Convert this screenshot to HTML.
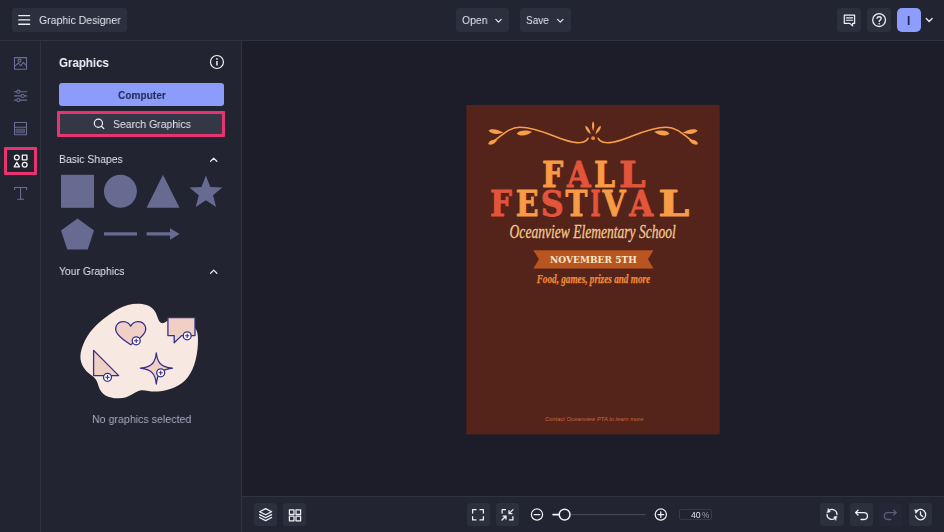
<!DOCTYPE html>
<html lang="en">
<head>
<meta charset="utf-8">
<title>Graphic Designer</title>
<style>
*{box-sizing:border-box;margin:0;padding:0}
html,body{width:944px;height:532px;overflow:hidden;background:#1c1d29}
body{font-family:"Liberation Sans",sans-serif;color:#e8e9f0;position:relative;font-size:12px}
.abs{position:absolute}
#topbar{left:0;top:0;width:944px;height:41px;background:#222431;border-bottom:1px solid #30323f}
#rail{left:0;top:41px;width:41px;height:491px;background:#222431;border-right:1px solid #30323f}
#panel{left:41px;top:41px;width:201px;height:491px;background:#222431;border-right:1px solid #30323f}
#canvas{left:242px;top:41px;width:702px;height:456px;background:#1c1d29}
#bottombar{left:242px;top:496px;width:702px;height:36px;background:#222431;border-top:1px solid #30323f}
.btn{position:absolute;background:#2c2f3e;border-radius:3px}
.txt{position:absolute;white-space:nowrap;line-height:1;transform-origin:0 0;color:#e4e5ee;will-change:transform}
svg{position:absolute;left:0;top:0;overflow:visible}
</style>
</head>
<body>
<div id="topbar" class="abs"></div>
<div id="rail" class="abs"></div>
<div id="panel" class="abs"></div>
<div id="canvas" class="abs"></div>
<div id="bottombar" class="abs"></div>

<!-- TOP BAR -->
<div class="btn" style="left:12px;top:8px;width:115px;height:24px"></div>
<div class="txt" style="left:38.6px;top:15.4px;font-size:11.5px;transform:scaleX(.913)">Graphic Designer</div>
<div class="btn" style="left:456px;top:8px;width:53px;height:24px"></div>
<div class="txt" style="left:462px;top:15.4px;font-size:11.5px;transform:scaleX(.907)">Open</div>
<div class="btn" style="left:520px;top:8px;width:51px;height:24px"></div>
<div class="txt" style="left:526.4px;top:15.4px;font-size:11.5px;transform:scaleX(.873)">Save</div>
<div class="btn" style="left:837px;top:8px;width:24px;height:24px"></div>
<div class="btn" style="left:867px;top:8px;width:24px;height:24px"></div>
<div class="btn" style="left:896.5px;top:8px;width:24px;height:24px;background:#8c9dfb;border-radius:5px"></div>
<div class="txt" style="left:906.7px;top:15px;font-size:12px;font-weight:700;color:#1e2250">I</div>

<!-- RAIL highlight -->
<div class="abs" style="left:4.3px;top:147.3px;width:32.4px;height:28.2px;border:3px solid #e7336f;border-radius:1px;background:#20222e"></div>

<!-- PANEL -->
<div class="txt" style="left:59.4px;top:55.7px;font-size:13px;font-weight:700;color:#f4f4f8;transform:scaleX(.885)">Graphics</div>
<div class="btn" style="left:59px;top:82.6px;width:165.2px;height:23.8px;background:#8b9cfb;border-radius:3px"></div>
<div class="txt" style="left:117.8px;top:89.8px;font-size:11.5px;font-weight:700;color:#232757;transform:scaleX(.88)">Computer</div>
<div class="abs" style="left:57.4px;top:110.6px;width:167.2px;height:26.4px;border:3px solid #e7336f;border-radius:1px;background:#343746"></div>
<div class="txt" style="left:112.5px;top:118.7px;font-size:11.5px;transform:scaleX(.909)">Search Graphics</div>
<div class="txt" style="left:59.2px;top:153.6px;font-size:11.5px;transform:scaleX(.906)">Basic Shapes</div>
<div class="txt" style="left:59.2px;top:265.6px;font-size:11.5px;transform:scaleX(.903)">Your Graphics</div>
<div class="txt" style="left:91.9px;top:413.9px;font-size:11.5px;color:#a7a9be;transform:scaleX(.925)">No graphics selected</div>

<!-- BOTTOM BAR -->
<div class="btn" style="left:254.2px;top:503.4px;width:23px;height:23px"></div>
<div class="btn" style="left:283.3px;top:503.4px;width:23px;height:23px"></div>
<div class="btn" style="left:466.5px;top:503.4px;width:23px;height:23px"></div>
<div class="btn" style="left:496px;top:503.4px;width:23px;height:23px"></div>
<div class="abs" style="left:678.6px;top:508.7px;width:33px;height:11.8px;border:1px solid #363949;border-radius:2px"></div>
<div class="txt" style="left:690.8px;top:510.7px;font-size:8.7px;color:#e4e5ee">40<span style="color:#9b9db2;margin-left:1.4px;font-size:8.2px">%</span></div>
<div class="btn" style="left:820.2px;top:503.4px;width:23.4px;height:23px"></div>
<div class="btn" style="left:849.6px;top:503.4px;width:23.4px;height:23px"></div>
<div class="btn" style="left:879px;top:503.4px;width:23.4px;height:23px;background:#252736"></div>
<div class="btn" style="left:908.6px;top:503.4px;width:23.4px;height:23px"></div>

<!--ICONS-->
<svg width="944" height="532" viewBox="0 0 944 532" fill="none" stroke-linecap="round" stroke-linejoin="round">
<!-- hamburger -->
<path d="M18.8 15.6H29.6M18.8 19.9H29.6M18.8 24.2H29.6" stroke="#eeeef4" stroke-width="1.4"/>
<!-- chevrons top -->
<path d="M495.8 19.4L498.5 22.1L501.2 19.4" stroke="#e4e5ee" stroke-width="1.2"/>
<path d="M557.6 19.4L560.3 22.1L563 19.4" stroke="#e4e5ee" stroke-width="1.2"/>
<path d="M926.3 18.6L929.2 21.5L932.1 18.6" stroke="#e4e5ee" stroke-width="1.4"/>
<!-- comment -->
<path d="M844.3 15.1H854.6V23.4H852.6V25.9L849.8 23.4H844.3Z" stroke="#f0f0f5" stroke-width="1.2"/>
<path d="M846.3 17.9H852.7M846.3 20.2H852.7" stroke="#f0f0f5" stroke-width="1.1"/>
<!-- help -->
<circle cx="879.1" cy="20.1" r="6.4" stroke="#f0f0f5" stroke-width="1.3"/>
<path d="M877.1 18.3C877.1 16.2 881.2 16.2 881.2 18.4C881.2 19.9 879.2 19.9 879.2 21.6" stroke="#f0f0f5" stroke-width="1.3"/>
<circle cx="879.2" cy="23.7" r=".8" fill="#f0f0f5"/>

<!-- rail: image -->
<g stroke="#6a6d92" stroke-width="1.1">
<rect x="14.5" y="57.6" width="12" height="11.7"/>
<circle cx="19.5" cy="60.6" r="1.5"/>
<path d="M14.8 66.2L18.3 63.2L21 65.8L23.3 62.4L26.3 65.6"/>
<!-- sliders -->
<path d="M14.4 91.7H16.7M20.1 91.7H26.8M14.4 95.9H21M24.4 95.9H26.8M14.4 100.1H16.7M20.1 100.1H26.8"/>
<circle cx="18.4" cy="91.7" r="1.6"/><circle cx="22.7" cy="95.9" r="1.6"/><circle cx="18.4" cy="100.1" r="1.6"/>
<!-- layout -->
<rect x="14.5" y="122.5" width="12" height="12.2"/>
<path d="M14.5 127.2H26.5"/>
<rect x="16.4" y="129.2" width="8.2" height="3.6" fill="#4a4d6a" stroke="#5d6084" stroke-width=".8"/>
<!-- T -->
<path d="M14.6 189.4V187.5H26.6V189.4M20.6 187.5V199.3M17.6 199.3H23.6"/>
</g>
<!-- rail: shapes (active) -->
<g stroke="#f4f4f8" stroke-width="1.3">
<circle cx="16.8" cy="157.5" r="2.4"/>
<rect x="22.3" y="155.2" width="4.6" height="4.6"/>
<path d="M16.8 162.3L19.5 166.8H14.1Z"/>
<circle cx="24.7" cy="164.7" r="2.4"/>
</g>
<!-- info -->
<circle cx="216.95" cy="62" r="6.5" stroke="#f0f0f5" stroke-width="1.2"/>
<path d="M216.95 61V65.4" stroke="#f0f0f5" stroke-width="1.5" stroke-linecap="butt"/>
<circle cx="216.95" cy="58.9" r=".85" fill="#f0f0f5"/>
<!-- search -->
<circle cx="98.4" cy="123.2" r="4.1" stroke="#f0f0f5" stroke-width="1.2"/>
<path d="M101.4 126.2L103.8 128.6" stroke="#f0f0f5" stroke-width="1.3"/>
<!-- panel chevrons -->
<path d="M210.6 161.3L213.7 158.2L216.8 161.3" stroke="#e4e5ee" stroke-width="1.3"/>
<path d="M210.6 273.2L213.7 270.1L216.8 273.2" stroke="#e4e5ee" stroke-width="1.3"/>
<!-- basic shapes -->
<g fill="#676b92" stroke="none">
<rect x="61" y="174.8" width="33" height="33"/>
<circle cx="120.4" cy="191.3" r="16.5"/>
<path d="M163 174.8L179.5 207.8H146.6Z"/>
<path d="M205.9 175.6L210.3 186.9L222.4 187.6L213.0 195.2L216.1 206.9L205.9 200.3L195.7 206.9L198.8 195.2L189.4 187.6L201.5 186.9Z"/>
<path d="M77.5 218.5L94 230.4L87.7 249.5H67.3L61 230.4Z"/>
<rect x="104" y="232.3" width="33" height="3.2"/>
<path d="M146.6 232.3H170V228.2L179.6 233.9L170 239.8V235.5H146.6Z"/>
</g>
</svg>
<!--/ICONS-->
<!--ICONS2-->
<svg width="944" height="532" viewBox="0 0 944 532" fill="none" stroke-linecap="round" stroke-linejoin="round">
<g stroke="#f0f0f5" stroke-width="1.25">
<!-- layers -->
<path d="M265.6 508.6L271.6 511.7L265.6 514.8L259.6 511.7Z"/>
<path d="M259.6 514.6L265.6 517.7L271.6 514.6"/>
<path d="M259.6 517.5L265.6 520.6L271.6 517.5"/>
<!-- grid -->
<rect x="289.4" y="509.8" width="4.6" height="4.6"/><rect x="296" y="509.8" width="4.6" height="4.6"/>
<rect x="289.4" y="516.2" width="4.6" height="4.6"/><rect x="296" y="516.2" width="4.6" height="4.6"/>
<!-- fit -->
<path d="M472.6 513V509.7H476M480 509.7H483.4V513M483.4 516.6V519.9H480M476 519.9H472.6V516.6"/>
<!-- shrink -->
<path d="M502.1 513V509.7H505.5M512.9 516.6V519.9H509.5"/>
<path d="M513 509.6L509 513.6M509 510.6V513.6H512M502 520L506 516M506 519V516H503"/>
<!-- minus / plus -->
<circle cx="537" cy="514.6" r="5.6"/><path d="M534.2 514.6H539.8"/>
<circle cx="660.8" cy="514.6" r="5.6"/><path d="M658 514.6H663.6M660.8 511.8V517.4"/>
</g>
<!-- slider -->
<path d="M570 514.6H645.3" stroke="#4a4d60" stroke-width="1" stroke-linecap="butt"/>
<path d="M553 514.6H559" stroke="#f0f0f5" stroke-width="1.6"/>
<circle cx="564.6" cy="514.6" r="5.4" fill="#222431" stroke="#f0f0f5" stroke-width="1.5"/>
<g stroke="#f0f0f5" stroke-width="1.3">
<!-- refresh -->
<path d="M829.13 510.30A5.0 5.0 0 0 1 837.00 514.40"/>
<path d="M827.00 514.40A5.0 5.0 0 0 0 834.87 518.50"/>
<path d="M828.40 508.63L830.30 511.69L827.30 512.69Z" fill="#f0f0f5" stroke-width=".5"/>
<path d="M835.60 520.17L833.70 517.11L836.70 516.11Z" fill="#f0f0f5" stroke-width=".5"/>
<!-- undo -->
<path d="M858 510.2L855.6 512.6L858 515"/>
<path d="M855.9 512.6H864A3.45 3.45 0 0 1 864 519.5H861"/>
<!-- history -->
<path d="M916.00 512.00A5.2 5.2 0 1 1 915.48 515.95"/>
<path d="M915 509.700L918.400 510.600L916 513.200Z" fill="#f0f0f5" stroke-width=".5"/>
<path d="M920.5 511.9V514.8L922.7 516.5"/>
</g>
<!-- redo disabled -->
<g stroke="#5b5e74" stroke-width="1.3">
<path d="M893.8 510.2L896.2 512.6L893.8 515"/>
<path d="M895.9 512.6H887.8A3.45 3.45 0 0 0 887.8 519.5H890.8"/>
</g>
</svg>
<!-- illustration -->
<svg width="944" height="532" viewBox="0 0 944 532" fill="none" stroke-linecap="round" stroke-linejoin="round">
<path d="M80.4 356C80.8 347 87 334 96 325.5C105 317 118 307.500 128 305C137 302.800 148 303.500 153.500 309.500C157.500 314 157.500 320 160.500 322.500C163.500 324.800 166 321 169 320C178 319 190 322 195.200 328C197.400 331 198 335 198 340C198 353 195 368 188 377C181 386 170 390.500 158 391.500C150 392.200 145 389.500 140 390.500C134 391.800 130 398 119 398.300C109 398.600 101 395 98.500 386C97.200 381 96 378.500 91 375C85 371 80 364 80.400 356Z" fill="#f8e8e2"/>
<g stroke="#372f8c" stroke-width="1.3">
<!-- heart -->
<path d="M130.700 326.200C128 320.500 119.500 319.800 116.500 325.500C113.500 331.500 118.500 337 130.700 344.700C142.900 337 147.900 331.500 144.900 325.500C141.900 319.800 133.400 320.500 130.700 326.200Z" fill="#f0cfc4"/>
<!-- speech -->
<path d="M167.900 317.700H195V335.600H181.600L174.200 342.700V335.600H167.900Z" fill="#f0cfc4"/>
<!-- triangle -->
<path d="M93.600 350.400V375.600H118.700Z" fill="#f0cfc4"/>
<!-- star -->
<path d="M156.300 353C157.300 362 160 366.800 172.500 368.200C160 369.600 157.300 374.500 156.300 384C155.300 374.500 152.600 369.600 140.400 368.200C152.600 366.800 155.300 362 156.300 353Z" fill="#f0cfc4"/>
<!-- plus badges -->
<g fill="#ffffff">
<circle cx="136.200" cy="340.800" r="4"/><circle cx="187.200" cy="335.800" r="4"/><circle cx="107.500" cy="377.300" r="4"/><circle cx="160.700" cy="372.800" r="4"/>
</g>
<path d="M134.500 340.800H137.900M136.200 339.100V342.500M185.500 335.800H188.900M187.200 334.100V337.500M105.800 377.300H109.200M107.500 375.600V379M159 372.800H162.400M160.700 371.100V374.500" stroke-width="1.1"/>
</g>
</svg>
<!--/ICONS2-->
<!--POSTER-->
<svg width="944" height="532" viewBox="0 0 944 532">
<rect x="466.300" y="105" width="253.400" height="329.400" fill="#54231a"/>
<!-- flourish -->
<g fill="none" stroke="#f79e49" stroke-width="1.6" stroke-linecap="round">
<path d="M588 138.300C586.500 142.500 580 143.500 574 142.300C560 141 541 127.500 520 127.300C508 127 500 138 492 142"/>
<path d="M598.200 138.300C599.700 142.500 606.200 143.500 612.200 142.300C626.200 141 645.200 127.500 666.200 127.300C678.200 127 686.200 138 694.200 142"/>
</g>
<g fill="#f79e49">
<path d="M488.500 130.500C492 127.500 499 130 503.500 132.600C499 134.600 491 134.600 488.500 130.500Z"/>
<path d="M488.300 144.300C488.300 140.500 493 139.300 497.500 139.800C495.500 143 492 145.800 488.300 144.300Z"/>
<path d="M516.800 133.800C519 129.800 527 130 532 131.800C528 135.600 520 137 516.800 133.800Z"/>
<path d="M697.700 130.500C694.200 127.500 687.200 130 682.700 132.600C687.200 134.600 695.200 134.600 697.700 130.500Z"/>
<path d="M697.900 144.300C697.900 140.500 693.200 139.300 688.700 139.800C690.700 143 694.200 145.800 697.900 144.300Z"/>
<path d="M669.400 133.800C667.200 129.800 659.200 130 654.200 131.800C658.200 135.600 666.200 137 669.400 133.800Z"/>
<path d="M593.100 121.300C594.900 123.500 594.300 128 593.100 131C591.900 128 591.300 123.500 593.100 121.300Z"/>
<path d="M585.400 125.800C588.400 126.800 590.300 131 590.700 134.200C588 132.600 585 129 585.400 125.800Z"/>
<path d="M600.800 125.800C597.800 126.800 595.900 131 595.500 134.200C598.200 132.600 601.200 129 600.800 125.800Z"/>
</g>
<circle cx="593.100" cy="138.200" r="1.900" fill="#f2813a"/>
<!-- titles -->
<g font-family="'DejaVu Serif Condensed','DejaVu Serif','Liberation Serif',serif" font-weight="700" font-size="36.2" stroke-width="0.8" stroke-linejoin="round">
<text y="186.6"><tspan x="542.06" textLength="21.28" lengthAdjust="spacingAndGlyphs" fill="#f79b45" stroke="#f79b45">F</tspan><tspan x="566.93" textLength="23.67" lengthAdjust="spacingAndGlyphs" fill="#e2553b" stroke="#e2553b">A</tspan><tspan x="594.06" textLength="21.10" lengthAdjust="spacingAndGlyphs" fill="#f79b45" stroke="#f79b45">L</tspan><tspan x="618.99" textLength="26.54" lengthAdjust="spacingAndGlyphs" fill="#e2553b" stroke="#e2553b">L</tspan></text>
<text y="216.2"><tspan x="489.93" textLength="21.90" lengthAdjust="spacingAndGlyphs" fill="#e2553b" stroke="#e2553b">F</tspan><tspan x="515.76" textLength="22.84" lengthAdjust="spacingAndGlyphs" fill="#f79b45" stroke="#f79b45">E</tspan><tspan x="540.74" textLength="22.99" lengthAdjust="spacingAndGlyphs" fill="#e2553b" stroke="#e2553b">S</tspan><tspan x="565.40" textLength="21.92" lengthAdjust="spacingAndGlyphs" fill="#f79b45" stroke="#f79b45">T</tspan><tspan x="590.45" textLength="10.07" lengthAdjust="spacingAndGlyphs" fill="#e2553b" stroke="#e2553b">I</tspan><tspan x="602.52" textLength="23.10" lengthAdjust="spacingAndGlyphs" fill="#f79b45" stroke="#f79b45">V</tspan><tspan x="629.23" textLength="23.87" lengthAdjust="spacingAndGlyphs" fill="#e2553b" stroke="#e2553b">A</tspan><tspan x="658.36" textLength="31.12" lengthAdjust="spacingAndGlyphs" fill="#f79b45" stroke="#f79b45">L</tspan></text>
</g>
<text x="509.600" y="238.200" textLength="166.200" lengthAdjust="spacingAndGlyphs" font-family="'Liberation Serif',serif" font-style="italic" font-size="18" fill="#f3c88e" stroke="#f3c88e" stroke-width=".3">Oceanview Elementary School</text>
<!-- ribbon -->
<path d="M533.400 250.200H653.500L648 259.300L653.500 268.400H533.400L538.900 259.300Z" fill="#b9561f"/>
<text x="550" y="262.800" textLength="86.800" lengthAdjust="spacingAndGlyphs" font-family="'DejaVu Serif','Liberation Serif',serif" font-weight="700" font-size="9.700" fill="#f6e7cb">NOVEMBER 5TH</text>
<text x="536.700" y="283" textLength="113.500" lengthAdjust="spacingAndGlyphs" font-family="'Liberation Serif',serif" font-weight="700" font-style="italic" font-size="12" fill="#f08838" stroke="#f08838" stroke-width=".25">Food, games, prizes and more</text>
<text x="544.900" y="420.800" textLength="98.500" lengthAdjust="spacingAndGlyphs" font-family="'Liberation Sans',sans-serif" font-style="italic" font-size="5.600" fill="#c4693c">Contact Oceanview PTA to learn more</text>
</svg>
<!--/POSTER-->
</body>
</html>
